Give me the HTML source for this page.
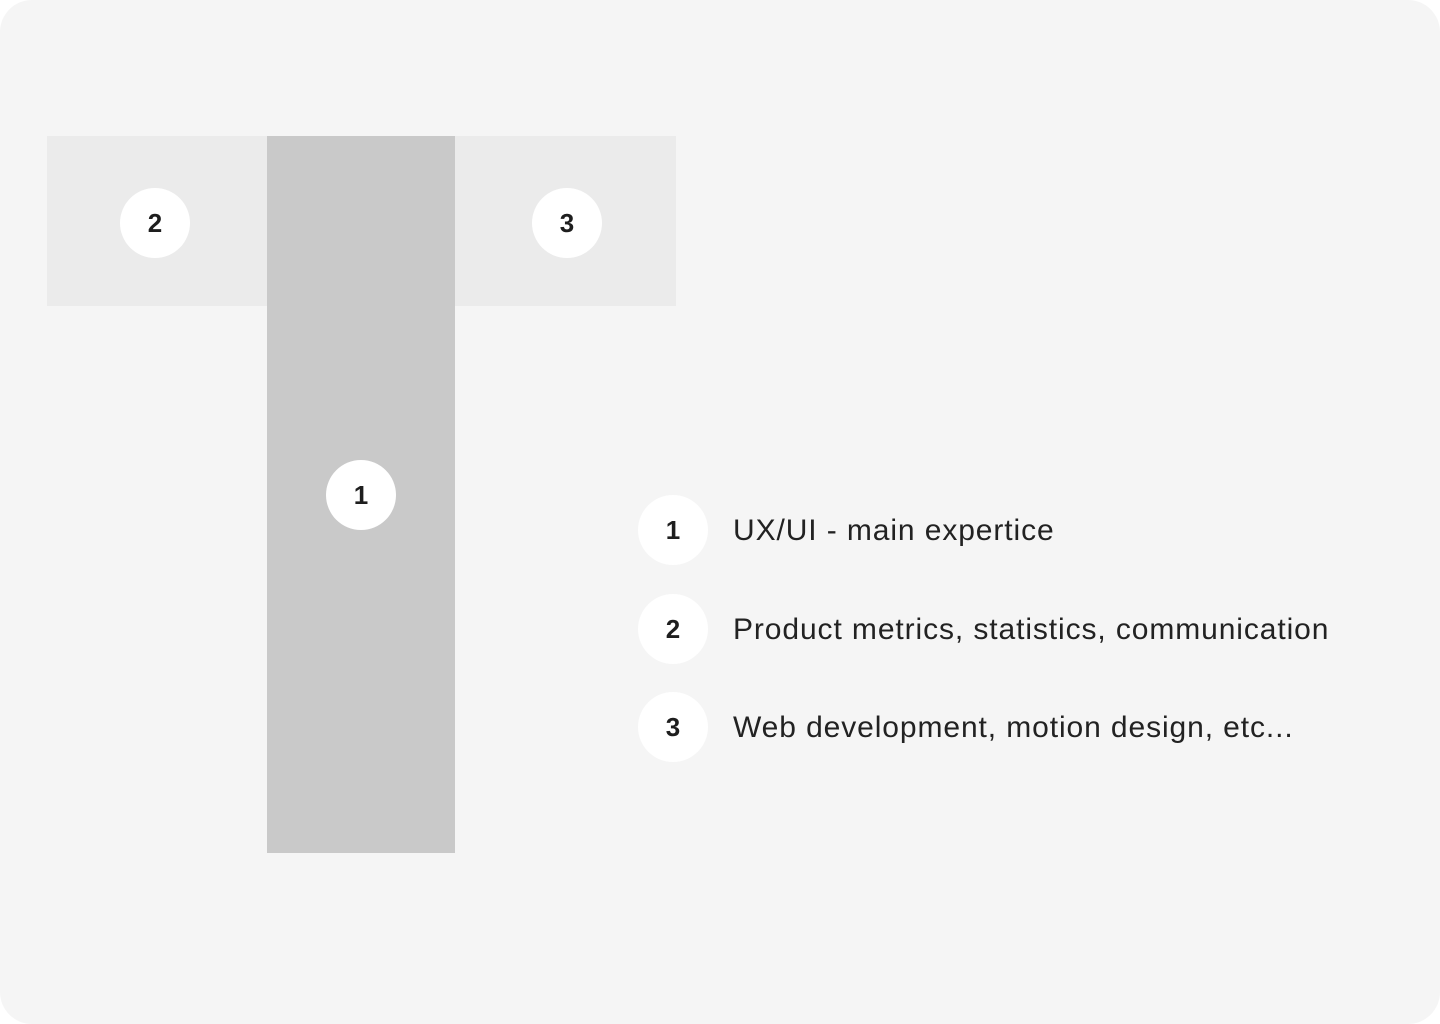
<!DOCTYPE html>
<html><head><style>
html,body{margin:0;padding:0;background:#fff;width:1440px;height:1024px;overflow:hidden}
.card{position:absolute;left:0;top:0;width:1440px;height:1024px;background:#f5f5f5;border-radius:32px}
.r{position:absolute}
.c{position:absolute;width:70px;height:70px;border-radius:50%;background:#fff;display:flex;align-items:center;justify-content:center;font:bold 26px "Liberation Sans",sans-serif;color:#1e1e1e}
.t{position:absolute;left:733px;font:30px "Liberation Sans",sans-serif;color:#222;letter-spacing:0.9px;white-space:nowrap;line-height:34px}
</style></head><body>
<div class="card">
<div class="r" style="left:47px;top:136px;width:629px;height:170px;background:#ebebeb"></div>
<div class="r" style="left:267px;top:136px;width:188px;height:717px;background:#c9c9c9"></div>
<div class="c" style="left:120px;top:188px">2</div>
<div class="c" style="left:532px;top:188px">3</div>
<div class="c" style="left:326px;top:460px">1</div>
<div class="c" style="left:638px;top:495px">1</div>
<div class="t" style="top:514px">UX/UI - main expertice</div>
<div class="c" style="left:638px;top:594px">2</div>
<div class="t" style="top:613px">Product metrics, statistics, communication</div>
<div class="c" style="left:638px;top:692px">3</div>
<div class="t" style="top:711px">Web development, motion design, etc...</div>
</div>
</body></html>
